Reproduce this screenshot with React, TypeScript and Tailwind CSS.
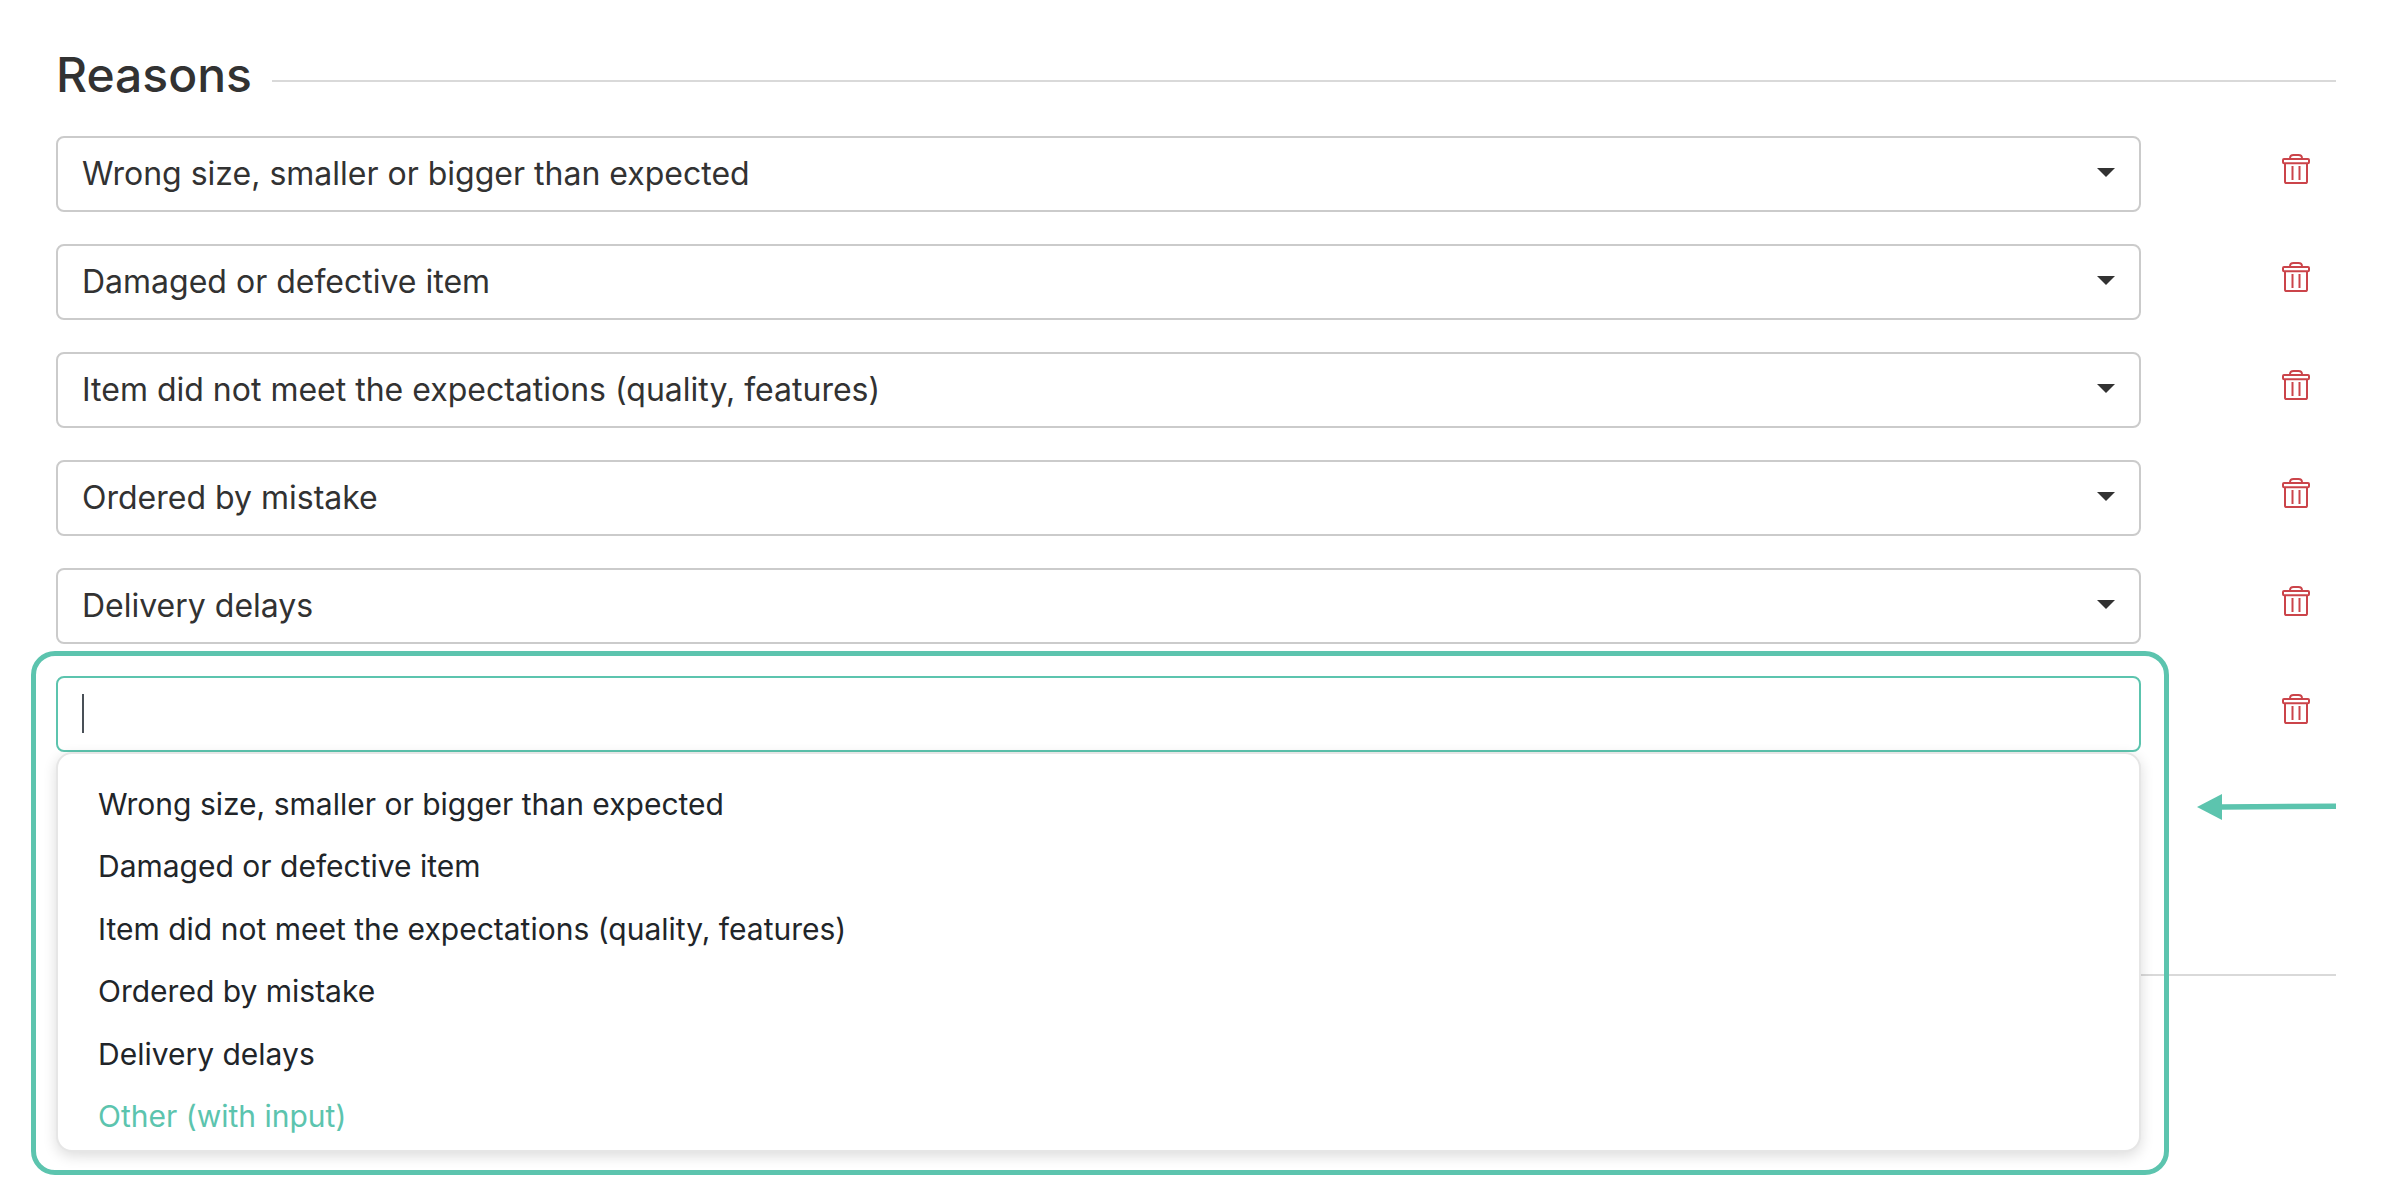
import { useState } from 'react'

const REASONS = [
    'Wrong size, smaller or bigger than expected',
    'Damaged or defective item',
    'Item did not meet the expectations (quality, features)',
    'Ordered by mistake',
    'Delivery delays',
]

const CUSTOM_REASON = 'Other (with input)'

function TrashIcon() {
    return (
        <svg
            width="28"
            height="30"
            viewBox="0 0 28 30"
            fill="none"
            stroke="#cb444a"
            strokeWidth="2"
            aria-hidden="true"
        >
            <path d="M8 5V4.4C8 2.4 9.6 1 11.6 1h4.8C18.4 1 20 2.4 20 4.4V5" />
            <rect x="1" y="5" width="26" height="4.2" rx="1" />
            <path d="M3 9.4V27.4c0 .9.7 1.6 1.6 1.6h18.8c.9 0 1.6-.7 1.6-1.6V9.4" />
            <path d="M10.5 12v14M17.5 12v14" />
        </svg>
    )
}

function DeleteButton({ label }: { label: string }) {
    return (
        <button
            type="button"
            aria-label={label}
            className="flex h-[66px] w-20 items-center justify-center"
        >
            <TrashIcon />
        </button>
    )
}

function ReasonSelect({ reason, index }: { reason: string; index: number }) {
    const [value, setValue] = useState(reason)

    return (
        <div className="flex items-start justify-between gap-[115px]">
            <div className="relative grow">
                <select
                    aria-label={`Reason ${index + 1}`}
                    value={value}
                    onChange={(e) => setValue(e.target.value)}
                    className="block h-[76px] w-full appearance-none rounded-lg border-2 border-[#cbcbcb] bg-white pr-16 pl-6 text-[32px] text-[#323232] outline-none"
                >
                    {REASONS.map((item) => (
                        <option key={item}>{item}</option>
                    ))}
                </select>
                <svg
                    className="pointer-events-none absolute top-8 right-[26px]"
                    width="18"
                    height="9"
                    viewBox="0 0 18 9"
                    aria-hidden="true"
                >
                    <path d="M0 0h18L9 9z" fill="#323232" />
                </svg>
            </div>
            <DeleteButton label={`Delete reason ${index + 1}`} />
        </div>
    )
}

function ReasonMenu() {
    return (
        <ul className="absolute inset-x-0 top-full z-10 flex min-h-[400px] flex-col justify-between rounded-2xl border-2 border-[#e6e6e6] bg-white pt-[19px] pb-[3px] shadow-[0_4px_14px_rgba(0,0,0,0.14)]">
            {REASONS.map((item) => (
                <li key={item}>
                    <button
                        type="button"
                        className="block w-full px-10 text-left text-[30px] leading-[62px] text-[#212529]"
                    >
                        {item}
                    </button>
                </li>
            ))}
            <li>
                <button
                    type="button"
                    className="block w-full px-10 text-left text-[30px] leading-[62px] text-[#5cc4ae]"
                >
                    {CUSTOM_REASON}
                </button>
            </li>
        </ul>
    )
}

function NewReason() {
    const [value, setValue] = useState('')

    return (
        <div className="relative flex items-start justify-between gap-[115px]">
            <div className="relative grow">
                <input
                    type="text"
                    aria-label="New reason"
                    value={value}
                    onChange={(e) => setValue(e.target.value)}
                    className="block h-[76px] w-full rounded-lg border-2 border-[#5cc4ae] bg-white px-6 text-[32px] text-[#495057] caret-transparent outline-none"
                />
                <span className="absolute top-[18px] left-[26px] h-[39px] w-0.5 bg-[#495057]" />
                <ReasonMenu />
                {/* highlight around the open menu */}
                <div className="pointer-events-none absolute -top-[25px] -right-7 -left-[25px] z-20 h-[524px] rounded-3xl border-[5px] border-[#5cc4ae]" />
            </div>
            <DeleteButton label="Delete new reason" />
            <svg
                className="absolute top-[118px] right-0"
                width="139"
                height="26"
                viewBox="0 0 139 26"
                aria-hidden="true"
            >
                <path d="M0 13L25 0v26z" fill="#5cc4ae" />
                <path d="M24 13L139 12.2" stroke="#5cc4ae" strokeWidth="5.4" />
            </svg>
        </div>
    )
}

export default function App() {
    return (
        <main className="min-h-screen bg-white pt-[45px] pr-[58px] pl-14 font-['Inter',sans-serif]">
            <div className="mb-[31px] flex items-center gap-5">
                <h1 className="text-5xl leading-[60px] font-medium text-[#323232]">
                    Reasons
                </h1>
                <hr className="mt-3 grow border-t-2 border-[#d9d9d9]" />
            </div>
            <div className="flex flex-col gap-8">
                {REASONS.map((reason, index) => (
                    <ReasonSelect key={reason} reason={reason} index={index} />
                ))}
                <NewReason />
            </div>
            <hr className="mt-[222px] border-t-2 border-[#d9d9d9]" />
        </main>
    )
}
